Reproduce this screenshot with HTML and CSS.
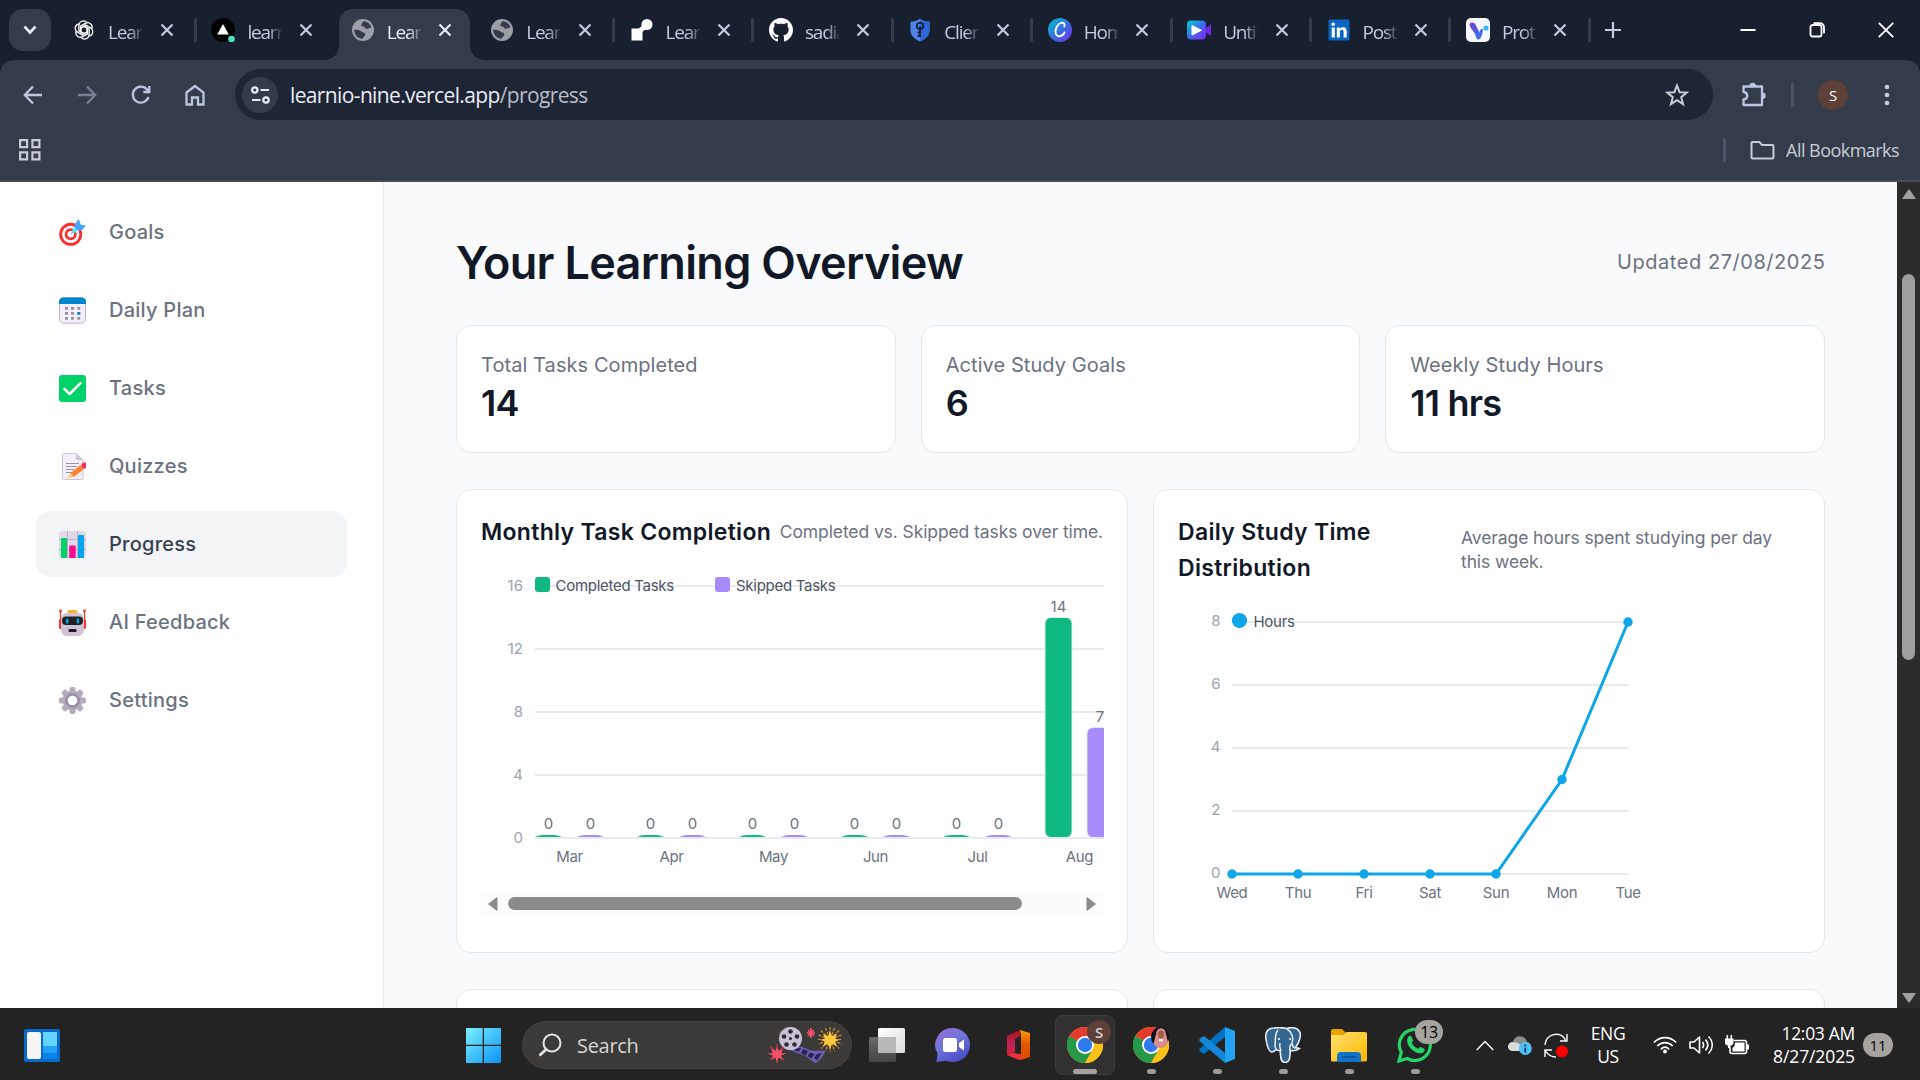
FILE: index.html
```html
<!DOCTYPE html>
<html lang="en">
<head>
<meta charset="utf-8">
<title>Learnio – Progress</title>
<link rel="stylesheet" href="styles.css">
</head>
<body>
<svg class="defs" width="0" height="0" aria-hidden="true">
  <defs>
    <symbol id="x" viewBox="0 0 14 14"><path d="M1.5 1.5l11 11M12.500 1.500l-11 11" stroke="currentColor" stroke-width="2.2" fill="none"/></symbol>
    <symbol id="globe" viewBox="0 0 24 24"><circle cx="12" cy="12" r="11" fill="#9aa0a6"/><path d="M12.500 3.200c3.500 0 7 2.500 8 6.300-2 .3-3.500 1.500-5 1.300-2-.3-1-2.300-3.500-2.300-1.500 0-2-.5-1.500-2 .3-1.200 1.200-2 2-3.300zM3.200 11.500c1.500.5 3 .2 5 .8 2 .5 2.300 2 4 2.200 1.800.2 2.300 1 2 2.500-.3 1.700-2 1.800-2.700 3.800-4.500 0-8.300-4-8.300-9.300z" fill="#343c4c"/></symbol>
    <linearGradient id="canva" x1="0" y1="0" x2="1" y2="1"><stop offset="0" stop-color="#00c4cc"/><stop offset=".55" stop-color="#3a6be0"/><stop offset="1" stop-color="#7d2ae8"/></linearGradient>
    <linearGradient id="vcall" x1="0" y1="0" x2="1" y2="1"><stop offset="0" stop-color="#00d4c8"/><stop offset=".5" stop-color="#3b6cf0"/><stop offset="1" stop-color="#8a1ff0"/></linearGradient>
    <linearGradient id="vee" x1="0" y1="0" x2="1" y2="1"><stop offset="0" stop-color="#7a3fd0"/><stop offset="1" stop-color="#2a7df0"/></linearGradient>
    <linearGradient id="win" x1="0" y1="0" x2="1" y2="1"><stop offset="0" stop-color="#7bf0ff"/><stop offset="1" stop-color="#0a93f5"/></linearGradient>
    <linearGradient id="chat" x1="0" y1="0" x2=".6" y2="1"><stop offset="0" stop-color="#9d6fd8"/><stop offset=".5" stop-color="#6f74d8"/><stop offset="1" stop-color="#4a50c4"/></linearGradient>
    <linearGradient id="office" x1="0" y1="0" x2="0" y2="1"><stop offset="0" stop-color="#ff9a00"/><stop offset=".5" stop-color="#e25400"/><stop offset="1" stop-color="#e04a00"/></linearGradient>
    <linearGradient id="officel" x1="0" y1="0" x2="0" y2="1"><stop offset="0" stop-color="#b3121a"/><stop offset=".6" stop-color="#c0245a"/><stop offset="1" stop-color="#e21a2c"/></linearGradient>
    <linearGradient id="folder" x1="0" y1="0" x2="1" y2="1"><stop offset="0" stop-color="#ffe070"/><stop offset="1" stop-color="#ffb900"/></linearGradient>
    <linearGradient id="lite" x1="0" y1="0" x2="1" y2="1"><stop offset="0" stop-color="#fff"/><stop offset="1" stop-color="#dcdcdc"/></linearGradient>
    <linearGradient id="dark" x1="0" y1="0" x2="0" y2="1"><stop offset="0" stop-color="#777"/><stop offset="1" stop-color="#4a4a4a"/></linearGradient>
    <symbol id="chrome" viewBox="0 0 36 36"><circle cx="18" cy="18" r="18" fill="#fbc116"/><path d="M18 18L2.400 9A18 18 0 0 1 33.600 9z" fill="#e33b2e"/><path d="M18 18h0L2.400 9A18 18 0 0 0 18 36l7.800-13.500z" fill="#279847"/><path d="M18 9h15.600A18 18 0 0 1 18 36l7.800-13.500z" fill="#fbc116"/><circle cx="18" cy="18" r="9" fill="#fff"/><circle cx="18" cy="18" r="7.200" fill="#2f7af0"/></symbol>
  </defs>
</svg>

<header class="tabstrip">
  <button class="tab-search"><svg width="14" height="10" viewBox="0 0 14 10"><path d="M1.500 1.500L7 7.500l5.500-6" fill="none" stroke="#e6ebf5" stroke-width="2.600"/></svg></button>
  <div class="tabs">
    <div class="tab"><svg class="fav" viewBox="0 0 24 24" fill="none" stroke="#fff" stroke-width="1.400"><path id="pt" d="M12 8.300l3.300 1.900v5.800l-4.700 2.700c-2.300 1.200-5 .3-6.200-1.700-.6-1.200-.7-2.300-.3-3.400"/><use href="#pt" transform="rotate(60 12 12)"/><use href="#pt" transform="rotate(120 12 12)"/><use href="#pt" transform="rotate(180 12 12)"/><use href="#pt" transform="rotate(240 12 12)"/><use href="#pt" transform="rotate(300 12 12)"/></svg><span class="tname">Lear</span><svg class="tx"><use href="#x"/></svg><i class="sep"></i></div>
    <div class="tab"><svg class="fav" viewBox="0 0 24 24"><circle cx="12" cy="12" r="12" fill="#000"/><path d="M12 6l5.800 10.500H6.200z" fill="#fff"/><circle cx="20.500" cy="21" r="3.300" fill="#50e3c2"/></svg><span class="tname">learn</span><svg class="tx"><use href="#x"/></svg></div>
    <div class="tab active"><svg class="fav"><use href="#globe"/></svg><span class="tname">Lear</span><svg class="tx"><use href="#x"/></svg></div>
    <div class="tab"><svg class="fav"><use href="#globe"/></svg><span class="tname">Lear</span><svg class="tx"><use href="#x"/></svg><i class="sep"></i></div>
    <div class="tab"><svg class="fav" viewBox="0 0 24 24" fill="#fff"><circle cx="17" cy="6.500" r="5.500"/><path d="M1.500 10.500h5.500c3 0 5-2 6-6l7 6c-4 .5-7.500 1.500-7.500 5v7h-11z"/></svg><span class="tname">Lear</span><svg class="tx"><use href="#x"/></svg><i class="sep"></i></div>
    <div class="tab"><svg class="fav" viewBox="0 0 16 16"><path fill="#fff" d="M8 0C3.580 0 0 3.580 0 8c0 3.540 2.290 6.530 5.470 7.590.4.070.55-.17.55-.38 0-.19-.01-.82-.01-1.490-2.010.37-2.530-.49-2.690-.94-.09-.23-.48-.94-.82-1.130-.28-.15-.68-.52-.01-.53.63-.01 1.080.58 1.230.82.72 1.210 1.870.87 2.330.66.070-.52.280-.87.510-1.070-1.780-.2-3.640-.89-3.640-3.950 0-.87.310-1.590.820-2.150-.080-.2-.36-1.020.080-2.120 0 0 .67-.21 2.200.82.640-.18 1.320-.27 2-.27s1.360.09 2 .27c1.530-1.040 2.200-.82 2.200-.82.440 1.100.160 1.920.080 2.120.51.56.82 1.270.82 2.150 0 3.070-1.870 3.750-3.650 3.950.29.25.54.73.54 1.480 0 1.070-.01 1.930-.01 2.200 0 .21.15.46.55.38A8.010 8.010 0 0 0 16 8c0-4.420-3.580-8-8-8z"/></svg><span class="tname">sadia</span><svg class="tx"><use href="#x"/></svg><i class="sep"></i></div>
    <div class="tab"><svg class="fav" viewBox="0 0 24 24"><path d="M12 .8c3 2 6 3 9.500 3V12c0 5.500-4 9-9.500 11.500C6.500 21 2.500 17.500 2.500 12V3.800c3.500 0 6.500-1 9.500-3z" fill="#4f84e8"/><path d="M12 .8c3 2 6 3 9.500 3V12c0 5.500-4 9-9.500 11.500z" fill="#2f66d8"/><g fill="none" stroke="#152244" stroke-width="1.800"><circle cx="12" cy="8" r="3.200"/><path d="M12 8v11M12 14.500h-2.500M12 18H9.500"/></g></svg><span class="tname">Clien</span><svg class="tx"><use href="#x"/></svg><i class="sep"></i></div>
    <div class="tab"><svg class="fav" viewBox="0 0 24 24"><circle cx="12" cy="12" r="12" fill="url(#canva)"/><path d="M16.300 8.500c1-2.800-1-4.200-3-3.700-3.800 1-6 5.700-5.800 9.200.2 3 2 4.700 4.300 4.300 2-.3 3.700-1.800 4.700-3.700" fill="none" stroke="#fff" stroke-width="1.900" stroke-linecap="round"/></svg><span class="tname">Hom</span><svg class="tx"><use href="#x"/></svg><i class="sep"></i></div>
    <div class="tab"><svg class="fav" viewBox="0 0 24 24"><rect x="0" y="2.500" width="19" height="19" rx="4" fill="url(#vcall)"/><path d="M18 11l6-5v12l-6-4z" fill="#6c2be8"/><path d="M5 7.500v9.500l9.500-4.700z" fill="#fff" stroke="#fff" stroke-linejoin="round"/></svg><span class="tname">Untit</span><svg class="tx"><use href="#x"/></svg><i class="sep"></i></div>
    <div class="tab"><svg class="fav" viewBox="0 0 24 24"><rect x="1.500" y="1.500" width="21" height="21" rx="1.500" fill="#0a66c2"/><path d="M4.700 9.500h3.100v10H4.700zM9.800 9.500h3v1.400c.6-1 1.700-1.700 3.100-1.700 3 0 3.800 1.900 3.800 4.700v5.600h-3.100v-5c0-1.400-.1-2.700-1.700-2.700s-2 1.200-2 2.600v5.100H9.800z" fill="#fff"/><circle cx="6.200" cy="6.300" r="1.800" fill="#fff"/></svg><span class="tname">Post</span><svg class="tx"><use href="#x"/></svg><i class="sep"></i></div>
    <div class="tab"><svg class="fav" viewBox="0 0 24 24"><rect width="24" height="24" rx="5" fill="#f7f8ff"/><path d="M3.500 6c2-2.500 5.500-1.500 6.500 1.500l3.500 7c.5-3 1.500-4.500 3.500-3-.5 5-2 9.500-4.500 10-2 0-2.500-2.500-3.500-5.500C8 13 4 11 3.500 6z" fill="url(#vee)"/><circle cx="20" cy="10" r="2.600" fill="#36b4f5"/></svg><span class="tname">Prot</span><svg class="tx"><use href="#x"/></svg><i class="sep"></i></div>
  </div>
  <svg class="newtab" width="16" height="16" viewBox="0 0 16 16"><path d="M8 0v16M0 8h16" stroke="#c3cbe0" stroke-width="2.200"/></svg>
  <div class="winctl">
    <svg width="16" height="18" viewBox="0 0 16 18"><path d="M.5 9h15" stroke="#fff" stroke-width="2"/></svg>
    <svg width="16" height="18" viewBox="0 0 16 18" fill="none" stroke="#fff" stroke-width="1.800"><rect x="1.500" y="4" width="11" height="11.500" rx="2"/><path d="M4.500 2.200h6.500a4 4 0 0 1 4 4v6"/></svg>
    <svg width="16" height="18" viewBox="0 0 16 18"><path d="M.8 1.800l14.400 14.400M15.200 1.800L.8 16.200" stroke="#fff" stroke-width="1.900"/></svg>
  </div>
</header>

<div class="chrome">
  <div class="toolbar">
    <div class="nav">
      <svg width="20" height="20" viewBox="0 0 20 20"><path d="M19 10H2M10 1.500L1.800 10l8.200 8.500" class="ln"/></svg>
      <svg width="20" height="20" viewBox="0 0 20 20" class="dim"><path d="M1 10h17M10 1.500l8.200 8.500-8.200 8.500" class="ln"/></svg>
      <svg width="20" height="20" viewBox="0 0 20 20"><path d="M17.500 12A8 8 0 1 1 16 4.500l2 2M18.300 1v6h-6" class="ln"/></svg>
      <svg width="20" height="22" viewBox="0 0 20 22"><path d="M1.500 8.500L10 2l8.500 6.500V20.500h-5.500v-7H7v7H1.500z" class="ln"/></svg>
    </div>
    <div class="omnibox">
      <span class="tune"><svg width="19" height="18" viewBox="0 0 19 18" fill="none" stroke="#e8ecf4" stroke-width="2.200"><circle cx="3.800" cy="4" r="2.700"/><path d="M9.500 4H18M1 14h8.500"/><circle cx="15" cy="14" r="2.700"/></svg></span>
      <span class="url">learnio-nine.vercel.app<em>/progress</em></span>
      <svg class="star" width="24" height="24" viewBox="0 0 24 24"><path d="M12 2.500l2.600 6.700 7.200.4-5.600 4.600 1.900 7L12 17.200l-6.100 4 1.900-7L2.200 9.600l7.200-.4z" fill="none" stroke="#c9ccd3" stroke-width="2"/></svg>
    </div>
    <svg class="puzzle" width="26" height="26" viewBox="0 0 26 26"><path d="M2.500 4.500h18.500v18.500H2.500v-5.500c5-.5 5-7 0-7.500z" fill="none" stroke="#bcc6e0" stroke-width="2.300" stroke-linejoin="round"/><path d="M8.500 4a3.200 3.200 0 0 1 6.400 0zM21.500 10.500a3.200 3.200 0 0 1 0 6.400z" fill="#bcc6e0"/></svg>
    <i class="bar"></i>
    <span class="avatar">S</span>
    <svg class="dots" width="6" height="22" viewBox="0 0 6 22" fill="#c3cbe0"><circle cx="3" cy="3" r="2.300"/><circle cx="3" cy="11" r="2.300"/><circle cx="3" cy="19" r="2.300"/></svg>
  </div>
  <div class="bookmarks">
    <svg width="22" height="22" viewBox="0 0 22 22" fill="none" stroke="#c9ccd3" stroke-width="2.200"><path d="M1.100 1.100h7v7h-7zM13.400 1.100h7v7h-7zM1.100 13.400h7v7h-7zM13.400 13.400h7v7h-7z"/></svg>
    <i class="bar"></i>
    <svg width="25" height="20" viewBox="0 0 25 20"><path d="M2.500 2h7l2.500 3h10.500q1 0 1 1v11.500q0 1-1 1h-20q-1 0-1-1V3q0-1 1-1z" fill="none" stroke="#c9ccd3" stroke-width="2"/></svg>
    <span class="allbm">All Bookmarks</span>
  </div>
</div>

<div class="viewport">
  <nav class="sidebar">
    <a class="item"><svg viewBox="0 0 27 27"><circle cx="11.700" cy="15.300" r="11.500" fill="#f8312f"/><circle cx="11.700" cy="15.300" r="8.600" fill="#fff"/><circle cx="11.700" cy="15.300" r="6" fill="#f8312f"/><circle cx="11.700" cy="15.300" r="3.200" fill="#fff"/><path d="M11.700 15.300L19 8" stroke="#83cbff" stroke-width="1.500"/><path d="M12.500 14.500l1-4L18 6l3 3-4.500 4.500z" fill="#50e2ff"/><path d="M16 5L19.500 0l1.500 3 .5 2.500 2 .5 3.500.5-4 4.500-4 .5L15.500 8z" fill="#46a4fb"/></svg><span>Goals</span></a>
    <a class="item"><svg viewBox="0 0 27 27"><rect x=".5" y=".7" width="26" height="25.500" rx="4.500" fill="#f3eef8" stroke="#bfb5cc"/><path d="M0 7V5q0-4.500 4.500-4.500h18Q27 .5 27 5v2z" fill="#0084ce"/><g fill="#998ea4"><path d="M6 10h3v2.800H6zM12 10h3v2.800h-3zM18.300 10h3v2.800h-3zM6 15h3v2.800H6zM12 15h3v2.800h-3zM6 20h3v2.800H6zM12 20h3v2.800h-3zM18.300 20h3v2.800h-3z"/></g><path d="M18.300 15h3v2.800h-3z" fill="#0084ce"/></svg><span>Daily Plan</span></a>
    <a class="item"><svg viewBox="0 0 27 27"><rect y="0" width="27" height="27" rx="3" fill="#00d26a"/><path d="M5.500 14l5.200 5L21.500 8.200" fill="none" stroke="#fff" stroke-width="2.600" stroke-linecap="round" stroke-linejoin="round"/></svg><span>Tasks</span></a>
    <a class="item"><svg viewBox="0 0 27 27"><path d="M3.500 1.500q0-1 1-1H17L24 7v18q0 1.500-1 1.500H4.500q-1 0-1-1z" fill="#f3eef8" stroke="#cdc4d6"/><path d="M17 .5L24 7h-6q-1 0-1-1z" fill="#cdc4d6"/><path d="M7 10.500h13M7 13.500h11M7 16.500h8M7 19.500h6" stroke="#998ea4" stroke-width="1.100"/><path d="M11.500 20L21.500 12l3 4.500L14.500 24z" fill="#ff822d"/><path d="M11.500 20l3 4L8 25.500z" fill="#ffce7c"/><path d="M21.500 12l2-1.500 3.200 4.200-2.200 1.800z" fill="#cdc4d6"/><circle cx="25.500" cy="12.500" r="3" fill="#f92f60"/></svg><span>Quizzes</span></a>
    <a class="item current"><svg viewBox="0 0 27 27"><rect width="27" height="27" rx="3.500" fill="#e1d8ec"/><path d="M8.500 0v27M18.500 0v27M0 8.500h27M0 18.500h27" stroke="#b4acbc" stroke-width=".9"/><path d="M2 8q0-1 1-1h4q1 0 1 1v19H2z" fill="#00d26a"/><path d="M10.200 15.500q0-1 1-1h4.500q1 0 1 1V27h-6.500z" fill="#f70a8d"/><path d="M19 5q0-1 1-1h4q1 0 1 1v22h-6z" fill="#00a6ed"/></svg><span>Progress</span></a>
    <a class="item"><svg viewBox="0 0 27 27"><path d="M1.500 2v10M25.500 2v10" stroke="#f8312f" stroke-width="1.200"/><g fill="#f8312f"><circle cx="1.500" cy="2" r="1.400"/><circle cx="25.500" cy="2" r="1.400"/><rect x="0" y="10" width="3" height="10" rx="1.500"/><rect x="24" y="10" width="3" height="10" rx="1.500"/></g><rect x="8.500" y="1" width="10" height="4" rx="1.500" fill="#ffb02e"/><rect x="2" y="4" width="23" height="23" rx="6" fill="#cdc4d6"/><rect x="3" y="7.500" width="21" height="8.500" rx="4" fill="#212121"/><rect x="7" y="9.500" width="2.400" height="5" rx="1.200" fill="#00a6ed"/><rect x="17.700" y="9.500" width="2.400" height="5" rx="1.200" fill="#00a6ed"/><rect x="9.500" y="20" width="8" height="3" rx="1" fill="#212121"/></svg><span>AI Feedback</span></a>
    <a class="item"><svg viewBox="0 0 27 27"><g fill="#b4acbc"><circle cx="13.500" cy="13.500" r="10"/><g id="cog"><rect x="10.500" y="0" width="6" height="27" rx="2"/><rect x="0" y="10.500" width="27" height="6" rx="2"/></g><use href="#cog" transform="rotate(45 13.500 13.500)"/></g><circle cx="13.500" cy="13.500" r="6.200" fill="#fff" stroke="#998ea4" stroke-width="2.800"/></svg><span>Settings</span></a>
  </nav>

  <main class="main">
    <div class="head"><h1>Your Learning Overview</h1><span class="updated">Updated 27/08/2025</span></div>
    <section class="stats">
      <div class="card stat"><span class="label">Total Tasks Completed</span><strong>14</strong></div>
      <div class="card stat"><span class="label">Active Study Goals</span><strong>6</strong></div>
      <div class="card stat"><span class="label">Weekly Study Hours</span><strong>11 hrs</strong></div>
    </section>
    <section class="charts">
      <article class="card chart">
        <div class="chead"><h2>Monthly Task Completion</h2><p class="s1">Completed vs. Skipped tasks over time.</p></div>
        <svg class="plot" width="623" height="342" viewBox="481 550 623 342">
          <g class="grid"><path d="M535 586h569M535 649h569M535 712h569M535 775h569M535 838h569"/></g>
          <g class="ylab"><text x="523" y="590.500">16</text><text x="523" y="653.500">12</text><text x="523" y="716.500">8</text><text x="523" y="779.500">4</text><text x="523" y="842.500">0</text></g>
          <rect x="535" y="577" width="15" height="15" rx="3" fill="#10b981"/><text class="leg" x="555.500" y="591">Completed Tasks</text>
          <rect x="715" y="577" width="15" height="15" rx="3" fill="#a78bfa"/><text class="leg" x="736" y="591">Skipped Tasks</text>
          <g fill="#10b981"><path id="z" d="M535 837q4-2 8-2h11q4 0 8 2z"/><use href="#z" x="102"/><use href="#z" x="204"/><use href="#z" x="306"/><use href="#z" x="408"/></g>
          <g fill="#a78bfa"><path id="y" d="M577 837q4-2 8-2h11q4 0 8 2z"/><use href="#y" x="102"/><use href="#y" x="204"/><use href="#y" x="306"/><use href="#y" x="408"/></g>
          <rect class="barc" x="1045" y="617.500" width="27" height="220" rx="6" fill="#10b981"/>
          <rect class="barc" x="1087" y="727.500" width="27" height="110" rx="6" fill="#a78bfa"/>
          <g class="vals"><text x="548.500" y="829">0</text><text x="590.500" y="829">0</text><text x="650.500" y="829">0</text><text x="692.500" y="829">0</text><text x="752.500" y="829">0</text><text x="794.500" y="829">0</text><text x="854.500" y="829">0</text><text x="896.500" y="829">0</text><text x="956.500" y="829">0</text><text x="998.500" y="829">0</text><text x="1058.500" y="612">14</text><text x="1100" y="722">7</text></g>
          <g class="xlab"><text x="569.500" y="862">Mar</text><text x="671.500" y="862">Apr</text><text x="773.500" y="862">May</text><text x="875.500" y="862">Jun</text><text x="977.500" y="862">Jul</text><text x="1079.500" y="862">Aug</text></g>
        </svg>
        <div class="hscroll"><svg width="11" height="16" viewBox="0 0 11 16"><path d="M10 1.500v13L1.500 8z"/></svg><i></i><svg width="11" height="16" viewBox="0 0 11 16"><path d="M1 1.500v13L9.500 8z"/></svg></div>
      </article>
      <article class="card chart">
        <div class="chead two"><h2>Daily Study Time<br>Distribution</h2><p class="s2">Average hours spent studying per day<br>this week.</p></div>
        <svg class="plot" width="622" height="342" viewBox="1178 586 622 342">
          <g class="grid"><path d="M1232 622h396M1232 685h396M1232 748h396M1232 811h396M1232 874h396"/></g>
          <g class="ylab"><text x="1220.500" y="626">8</text><text x="1220.500" y="689">6</text><text x="1220.500" y="752">4</text><text x="1220.500" y="815">2</text><text x="1220.500" y="878">0</text></g>
          <circle cx="1239.500" cy="620.500" r="7.600" fill="#0ea5e9"/><text class="leg" x="1253.500" y="627">Hours</text>
          <path d="M1232 874h264L1562 779.500L1628 622" fill="none" stroke="#0ea5e9" stroke-width="3"/>
          <g fill="#0ea5e9"><circle cx="1232" cy="874" r="4.700"/><circle cx="1298" cy="874" r="4.700"/><circle cx="1364" cy="874" r="4.700"/><circle cx="1430" cy="874" r="4.700"/><circle cx="1496" cy="874" r="4.700"/><circle cx="1562" cy="779.500" r="4.700"/><circle cx="1628" cy="622" r="4.700"/></g>
          <g class="xlab"><text x="1232" y="898">Wed</text><text x="1298" y="898">Thu</text><text x="1364" y="898">Fri</text><text x="1430" y="898">Sat</text><text x="1496" y="898">Sun</text><text x="1562" y="898">Mon</text><text x="1628" y="898">Tue</text></g>
        </svg>
      </article>
      <article class="card chart"></article>
      <article class="card chart"></article>
    </section>
  </main>
  <div class="vscroll"><svg width="16" height="12" viewBox="0 0 16 12"><path d="M8 1.500l6.300 9H1.700z"/></svg><i></i><svg width="16" height="12" viewBox="0 0 16 12"><path d="M8 10.500l6.300-9H1.700z"/></svg></div>
</div>

<footer class="taskbar">
  <svg class="widgets" width="36" height="33" viewBox="0 0 36 33"><rect width="36" height="33" rx="2" fill="#0a6ac8"/><rect x="3" y="3" width="14" height="27" rx="2" fill="#f5f5f5"/><path d="M19 3h14v14.500H19z" fill="#62d4ff"/><path d="M19 17.500h14V24H19z" fill="#1ea2fa"/><path d="M19 24h14v6H19z" fill="#0a84ea"/></svg>
  <svg class="start" width="35" height="35" viewBox="0 0 35 35"><path d="M0 1q0-1 1-1h15.700v16.700H0zM18 0h16q1 0 1 1v15.700H18zM0 18h16.700v17H1q-1 0-1-1zM18 18h17v16q0 1-1 1H18z" fill="url(#win)"/></svg>
  <div class="search">
    <svg width="24" height="24" viewBox="0 0 24 24" fill="none" stroke="#e6e6e6" stroke-width="2"><circle cx="14" cy="10" r="8.500"/><path d="M8 16.500L1.500 22.500" stroke-width="2.800"/></svg>
    <span>Search</span>
    <svg class="decor" width="78" height="38" viewBox="768 1026 78 38">
      <path d="M789 1050c6-5 13-4 18-1 6 3 10 1 18 2-1 5-5 9-9 12-4-1-7-6-13-8-5-2-9-3-14-5z" fill="#6c5fb8"/><path d="M796 1048.500l5-.7-1.500 3.700-5-.7zM803 1049l5 2-2 4.500-5-2zM810 1052.500l4.500 1.500-3 4.500-4-2.500zM817 1054l5-1-5 7.500-3-2.500z" fill="#2c2450"/>
      <circle cx="790.500" cy="1038.500" r="11.500" fill="#c9c2d2"/><g fill="#2e2838"><circle cx="790.500" cy="1038.500" r="1.500"/><circle cx="790.500" cy="1031.500" r="2.300"/><circle cx="797" cy="1036.500" r="2.300"/><circle cx="794.500" cy="1044.500" r="2.300"/><circle cx="786.500" cy="1044.500" r="2.300"/><circle cx="784" cy="1036.500" r="2.300"/></g>
      <path d="M830 1027v25M818 1039.500h24M821 1030.500l18 18M839 1030.500l-18 18M825.500 1028l9 23M834.500 1028l-9 23M818.500 1035l23 9M841.500 1035l-23 9" stroke="#d8962a" stroke-width="1.100" stroke-dasharray="3 1"/><path d="M830 1031l2 5 5-2-2 4.500 4.500 1.500-4.500 1.500 2 4.500-5-2-2 5-2-5-5 2 2-4.500-4.500-1.500 4.500-1.500-2-4.500 5 2z" fill="#ffc83d"/>
      <path d="M777 1044v19M768 1053.500h18M770.500 1047l13 13M783.500 1047l-13 13" stroke="#d33a57" stroke-width="1.200"/><path d="M777 1047l1.800 4 4-2-1.500 4 3 1.500-3.300 1 1.300 4-3.600-2-1.700 4-1.700-4-3.600 2 1.300-4-3.300-1 3-1.500-1.500-4 4 2z" fill="#f8506a"/>
      <path d="M811 1028v10M807 1033h8M808 1030l6 6M814 1030l-6 6" stroke="#f8506a" stroke-width="1.700"/>
    </svg>
  </div>
  <div class="apps">
    <div class="app"><svg width="36" height="36" viewBox="0 0 36 36"><rect x="9" y="1" width="27" height="25" rx="1.500" fill="url(#lite)"/><rect x="0" y="10" width="27" height="25" rx="1.500" fill="url(#dark)" opacity=".85"/><path d="M9 10h18v16H9z" fill="#b9b9b9"/></svg></div>
    <div class="app"><svg width="36" height="36" viewBox="0 0 36 36"><path d="M18 1a17 17 0 1 1-6.500 32.700L1.500 35l1-8.500A17 17 0 0 1 18 1z" fill="url(#chat)"/><rect x="8" y="11" width="14" height="14" rx="2.500" fill="#fff"/><path d="M24 16l5-3.500v11L24 20z" fill="#fff"/></svg></div>
    <div class="app"><svg width="36" height="36" viewBox="0 0 36 36"><path d="M6 9l13-6v6l-5 3v13l-8 3z" fill="url(#officel)"/><path d="M6 28l6-2 8 1v5.500l-2 .5z" fill="#f0303a"/><path d="M19 3l10 3v24l-9 3v-6V8z" fill="url(#office)"/></svg></div>
    <div class="app on"><svg width="36" height="36"><use href="#chrome"/></svg><b class="badge s">S</b><i class="run wide"></i></div>
    <div class="app"><svg width="36" height="36"><use href="#chrome"/></svg><svg class="photo" width="18" height="22" viewBox="0 0 18 22"><ellipse cx="9" cy="10" rx="9" ry="10" fill="#12101c"/><path d="M5.500 5c1-5 8-5 9 0l2.500 10c-2 7-10 8-14.500 2z" fill="#d98c8c"/><ellipse cx="10" cy="7.500" rx="3" ry="4" fill="#9c5f48"/><path d="M8 12h4v2.500H8z" fill="#f2e8e8"/></svg><i class="run"></i></div>
    <div class="app"><svg width="36" height="36" viewBox="0 0 36 36"><path d="M26 0l10 4v28l-10 4z" fill="#22a4f2"/><path d="M26 0v10L5 27l-4-2.500q-1.500-1.500 0-3z" fill="#0071c5"/><path d="M26 36V26L5 9l-4 2.500q-1.500 1.500 0 3z" fill="#1488d8"/></svg><i class="run"></i></div>
    <div class="app"><svg width="36" height="36" viewBox="0 0 36 36"><path d="M9 1C2 1 0 6 1 12c1 7 3 13 6 13 2 0 3-1.500 4-2.500 1 .8 2.500 1.200 4 1 1 3-.5 12 5 12 6 0 4.500-8 5.500-12 3 .5 7 0 9-2-1.500-.5-3-.3-4-1 4-5 6-13 4-16-3-5-10-4-13-3-4-1-9-1-12.500-.5z" fill="#336791" stroke="#e8eef4" stroke-width="1.600"/><path d="M13 3c-4 5-2 11-3 15 0 3 1.500 4 1 5M22 2c5 3 7 9 5 14 0 3 1 4 3 5M16 24c-1-3-2-5-1-8M25 24c0-3-1-4 1-7" fill="none" stroke="#e8eef4" stroke-width="1.500"/><circle cx="14" cy="12" r="1" fill="#fff"/><circle cx="25" cy="12" r="1" fill="#fff"/></svg><i class="run"></i></div>
    <div class="app"><svg width="36" height="36" viewBox="0 0 36 36"><path d="M0 4q0-2 2-2h9l4 4v6H0z" fill="#e8a200"/><path d="M0 8h13l2.500-3H34q2 0 2 2v26q0 1.500-1.500 1.500h-33Q0 34.500 0 33z" fill="url(#folder)"/><path d="M6 35v-6q0-4 4-4h16q4 0 4 4v6z" fill="#1272c8"/><path d="M11 30h14" stroke="#0a4a94" stroke-width="1.500"/></svg><i class="run"></i></div>
    <div class="app"><svg width="36" height="36" viewBox="0 0 36 36"><path d="M2 34l2.300-8.500a15.500 15.500 0 1 1 6 6z" fill="none" stroke="#25d366" stroke-width="3.200"/><path d="M11 10c1.500-2 3-1.500 3.500-.3l1.500 3.500c.3 1-1.300 2-1.300 2.600 1.500 3 3.500 4.700 6.500 5.900.8 0 1.500-2 2.500-1.700l3.500 1.800c1 .6.500 2.700-1 3.700-3 2-7 .5-10.500-2.200C12 20.500 8.500 15 11 10z" fill="#25d366"/></svg><b class="badge n">13</b><i class="run"></i></div>
  </div>
  <div class="tray">
    <svg width="18" height="11" viewBox="0 0 18 11"><path d="M.8 10L9 1.500l8.200 8.500" fill="none" stroke="#fff" stroke-width="1.400"/></svg>
    <svg class="cloud" width="24" height="20" viewBox="0 0 24 20"><path d="M5 16a4.500 4.500 0 0 1 0-9c1.500-7 12-8 14 0 3 0 4 3 3 6l-4 3z" fill="#8d8d8d"/><path d="M4.500 16a4.500 4.500 0 1 1 2-8.500c3-.5 5 1 6.500 3.500l3 5z" fill="#dadada"/><circle cx="17.300" cy="13.500" r="6.500" fill="#4fc3f7"/><path d="M17.300 12.500v5M17.300 9.500v1.800" stroke="#12344a" stroke-width="1.800"/></svg>
    <svg class="sync" width="24" height="25" viewBox="0 0 24 25"><path d="M1 12C2 1 16-3 21.500 7M23 1v7h-7M12 24c-5 0-8-2-10.500-6M1 24v-7h7" fill="none" stroke="#fff" stroke-width="1.400"/><circle cx="18" cy="18.500" r="6" fill="#f00"/></svg>
    <div class="lang">ENG<br>US</div>
    <svg class="wifi" width="24" height="18" viewBox="0 0 24 18" fill="none" stroke="#fff" stroke-width="1.700"><path d="M.8 6.500c6.500-6.500 16-6.500 22.400 0M4.300 10c4.500-4.500 11-4.500 15.400 0M7.800 13.300c2.600-2.600 5.800-2.600 8.400 0"/><circle cx="12" cy="15.500" r="1.900" fill="#fff" stroke="none"/></svg>
    <svg class="vol" width="24" height="20" viewBox="0 0 24 20" fill="none" stroke="#fff" stroke-width="1.600"><path d="M1 7h4l5.500-5v16L5 13H1z" stroke-linejoin="round"/><path d="M13.500 7c1.500 2 1.500 4 0 6M16.500 4.500c3 3.500 3 7.500 0 11M19.500 1.500c5 5 5 12 0 17"/></svg>
    <svg class="bat" width="24" height="20" viewBox="0 0 24 20"><path d="M8.500 5.500h11q2 0 2 2v9q0 2-2 2H7q-2 0-2-2v-4" fill="none" stroke="#fff" stroke-width="1.600"/><path d="M10 7.500h9.500v9H7.500v-3.500q2.500-1.500 2.500-5.500zM22 9.500h2v5h-2zM0 3.500h8.500v4q0 2.500-3 3v2.500H3V10.500Q0 10 0 7.500zM1.500 0h1.600v4H1.500zM5.500 0h1.600v4H5.500z" fill="#fff"/></svg>
    <div class="clock"><span class="c1">12:03 AM</span><span class="c2">8/27/2025</span></div>
    <span class="count">11</span>
  </div>
</footer>
</body>
</html>
```
FILE: styles.css
```css
* { box-sizing: border-box; margin: 0; padding: 0; }
body { width: 1920px; height: 1080px; overflow: hidden; display: flex; flex-direction: column; font-family: Inter, "Liberation Sans", sans-serif; background: #182030; }
.defs { position: absolute; }
svg { display: block; flex: none; }
button { border: 0; }
.tabstrip, .chrome, .taskbar { font-family: "Open Sans", "Noto Sans", sans-serif; }

/* Browser tab strip */
.tabstrip { height: 60px; display: flex; align-items: center; flex: none; }
.tab-search { width: 42px; height: 42px; margin-left: 9px; border-radius: 14px; background: #343c4c; display: grid; place-items: center; }
.tabs { display: flex; margin-left: 5px; align-self: stretch; }
.tab { width: 139.4px; display: flex; align-items: center; padding-left: 16px; color: #c3cbe0; position: relative; }
.fav { width: 24px; height: 24px; }
.tname { width: 34px; margin-left: 12px; padding-top: 3px; font-size: 19px; letter-spacing: -1.2px; overflow: hidden; white-space: nowrap; -webkit-mask-image: linear-gradient(90deg, #000 62%, rgba(0, 0, 0, .15)); mask-image: linear-gradient(90deg, #000 62%, rgba(0, 0, 0, .15)); }
.tx { width: 14px; height: 14px; margin-left: 17.5px; }
.sep { width: 3px; height: 24px; border-radius: 1px; background: #343c4c; margin-left: auto; margin-right: -1.5px; }
.active { margin-top: 9px; padding-bottom: 9px; color: #e8ecf6; isolation: isolate; }
.active::before { content: ""; position: absolute; z-index: -1; inset: 0 4px; background: #343c4c; border-radius: 14px 14px 0 0; }
.active::after { content: ""; position: absolute; z-index: -1; left: -10px; right: -10px; bottom: 0; height: 14px; background: radial-gradient(circle 14px at 0 0, transparent 13.5px, #343c4c 14px) left / 14px 14px no-repeat, radial-gradient(circle 14px at 100% 0, transparent 13.5px, #343c4c 14px) right / 14px 14px no-repeat; }
.newtab { margin-left: 16px; }
.winctl { display: flex; gap: 53px; margin-left: auto; margin-right: 26px; }

/* Toolbar and bookmarks */
.chrome { height: 122px; flex: none; background: #343c4c; border-radius: 14px 14px 0 0; border-bottom: 2px solid #4a4a50; }
.toolbar { height: 69px; display: flex; align-items: center; }
.ln { fill: none; stroke: #bcc6e0; stroke-width: 2.3; }
.dim { opacity: .5; }
.nav { display: flex; gap: 34px; align-items: center; margin-left: 23px; width: 212px; }
.omnibox { width: 1478px; height: 51px; border-radius: 26px; background: #1e2636; display: flex; align-items: center; padding-left: 7px; }
.tune { width: 36px; height: 36px; border-radius: 50%; background: #343c4c; display: grid; place-items: center; }
.url { margin-left: 12px; font-size: 21px; letter-spacing: -0.63px; color: #e8ecf4; }
.url em { font-style: normal; color: #b9bdc6; }
.star { margin-left: auto; margin-right: 24px; }
.puzzle { margin-left: 28px; }
.bar { width: 3px; height: 24px; background: #4c5568; border-radius: 1px; }
.toolbar .bar { margin-left: 24px; }
.avatar { width: 30px; height: 30px; border-radius: 50%; background: #5d4037; color: #fff; font-size: 15px; display: grid; place-items: center; margin-left: 24px; }
.dots { margin-left: 36px; }
.bookmarks { height: 42px; display: flex; align-items: center; padding-left: 19px; }
.bookmarks .bar { margin-left: auto; }
.bookmarks .bar + svg { margin-left: 24px; }
.allbm { margin-left: 11px; margin-right: 21px; font-size: 18px; letter-spacing: -0.54px; color: #c9ccd3; white-space: nowrap; }

/* Page */
.viewport { flex: 1; min-height: 0; display: flex; background: #f9fafb; overflow: hidden; }
.sidebar { width: 384px; flex: none; background: #fff; border-right: 1px solid #e5e7eb; padding: 17px 36px 0; display: flex; flex-direction: column; gap: 12px; }
.item { height: 66px; flex: none; border-radius: 15px; display: flex; align-items: center; padding-left: 23px; gap: 23px; font-size: 20px; letter-spacing: 0.25px; font-weight: 500; color: #6b7280; }
.item svg { width: 27px; height: 27px; }
.current { background: #f3f4f6; color: #374151; }
.main { width: 1513px; flex: none; background: #f9fafb; padding: 53px 72px 0; color: #111827; }
.head { height: 54px; margin-bottom: 36px; display: flex; align-items: center; justify-content: space-between; }
h1 { font-size: 45px; font-weight: 600; letter-spacing: -0.68px; white-space: nowrap; }
.updated { font-size: 20px; letter-spacing: 0.55px; margin-right: -0.5px; color: #6b7280; }
.card { background: #fff; border: 1px solid #e5e7eb; border-radius: 15px; }
.stats { display: grid; grid-template-columns: repeat(3, 1fr); gap: 25px; margin-bottom: 36px; }
.stat { height: 128px; padding: 24px; display: flex; flex-direction: column; }
.label { font-size: 20px; line-height: 30px; letter-spacing: 0.07px; color: #6b7280; }
.stat strong { font-size: 36px; line-height: 47px; font-weight: 600; letter-spacing: -0.8px; }
.charts { display: grid; grid-template-columns: 1fr 1fr; gap: 36px 25px; }
.chart { height: 464px; padding: 24px 24px 0; min-width: 0; overflow: hidden; }
.chead { display: flex; align-items: center; justify-content: space-between; height: 36px; white-space: nowrap; }
.two { height: 72px; }
h2 { font-size: 23px; font-weight: 600; line-height: 36px; letter-spacing: 0.3px; }
.chead p { font-size: 17.5px; line-height: 24px; letter-spacing: -0.1px; color: #6b7280; }
.s2 { width: 339px; }
.plot { font-size: 15px; }
.grid path { stroke: #e9eaef; stroke-width: 2; }
.ylab { text-anchor: end; fill: #9ca3af; }
.vals { text-anchor: middle; fill: #6b7280; }
.xlab { text-anchor: middle; fill: #6b7280; letter-spacing: -0.35px; }
.leg { fill: #4b5563; letter-spacing: -0.28px; }
.barc { stroke: #dcebf0; stroke-width: 1; }
.hscroll { height: 23px; background: #fcfcfc; display: flex; align-items: center; justify-content: space-between; padding: 0 6px; fill: #8b8b8b; stroke: #8b8b8b; stroke-linejoin: round; }
.hscroll i { width: 514px; height: 13px; border-radius: 7px; background: #8b8b8b; margin-left: 10px; margin-right: auto; }
.vscroll { width: 23px; flex: none; background: #2c2c2c; display: flex; flex-direction: column; align-items: center; padding: 6px 0 4px; fill: #9f9f9f; stroke: #9f9f9f; stroke-linejoin: round; }
.vscroll i { width: 13px; height: 386px; border-radius: 7px; background: #9f9f9f; margin-top: 74px; margin-bottom: auto; }

/* Taskbar */
.taskbar { height: 72px; flex: none; background: #242323; display: flex; align-items: center; color: #fff; padding-top: 2px; }
.widgets { margin-left: 24px; }
.start { margin-left: 406px; }
.search { width: 330px; height: 48px; margin-left: 21px; border-radius: 24px; background: #3b3a39; border: 1px solid #454443; display: flex; align-items: center; padding-left: 15px; font-size: 20px; color: #d6d6d6; }
.search span { margin-left: 15px; letter-spacing: -0.3px; }
.decor { margin-left: auto; margin-right: 5px; }
.apps { display: flex; margin-left: 2px; }
.app { width: 60px; height: 60px; margin: 0 3px; display: grid; place-items: center; position: relative; border-radius: 8px; }
.on { background: #323132; border: 1px solid #3d3c3d; }
.run { position: absolute; bottom: 1px; left: 26px; width: 9px; height: 5px; border-radius: 3px; background: #9d9b99; }
.wide { left: 17px; bottom: 0; width: 24px; background: #a6a39f; }
.badge { position: absolute; display: grid; place-items: center; border-radius: 50%; font-weight: 400; }
.s { width: 24px; height: 24px; left: 31px; top: 4px; background: #5d4037; font-size: 15px; font-weight: 600; color: #d8d0cc; }
.n { width: 28px; height: 24px; left: 30px; top: 5px; border-radius: 12px; background: #a6a39f; color: #000; font-size: 16px; letter-spacing: -0.5px; }
.photo { position: absolute; left: 30px; top: 12px; }
.tray { display: flex; align-items: center; margin-left: 28px; }
.cloud { margin-left: 14px; }
.sync { margin-left: 12px; }
.lang { width: 60px; text-align: center; margin-left: 10px; font-size: 17.5px; line-height: 23px; letter-spacing: -0.4px; }
.wifi { margin-left: 15px; }
.vol { margin-left: 12px; }
.bat { margin-left: 12px; }
.clock { width: 106px; display: flex; flex-direction: column; align-items: flex-end; font-size: 17.5px; line-height: 23px; }
.c1 { letter-spacing: -0.3px; }
.c2 { letter-spacing: -0.1px; }
.count { width: 30px; height: 24px; margin-left: 8px; border-radius: 12px; background: #a6a39f; color: #000; display: grid; place-items: center; font-size: 15px; }
```
